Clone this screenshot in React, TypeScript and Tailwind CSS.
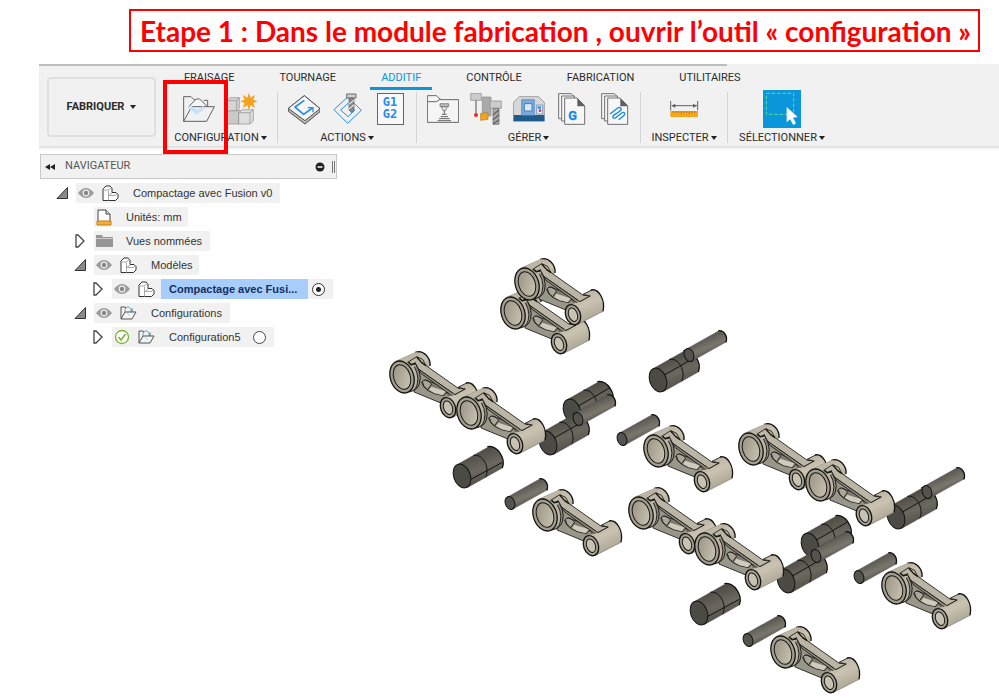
import type { ReactNode } from 'react';

const TABS = ['FRAISAGE', 'TOURNAGE', 'ADDITIF', 'CONTRÔLE', 'FABRICATION', 'UTILITAIRES'];

function Icon({ box, children }: { box: string; children: ReactNode }) {
  return (
    <button className="block h-8 w-8 shrink-0">
      <svg viewBox={box} className="h-8 w-8" fill="none" aria-hidden="true">
        {children}
      </svg>
    </button>
  );
}

function FolderIcon() {
  return (
    <Icon box="456 99 96 96">
      <path d="M458 184V110h22l9 9h8" stroke="#606060" strokeWidth="3" />
      <path d="M518 121h12v18" stroke="#606060" strokeWidth="3" />
      <path d="M474 139l22-22h10l22 22" fill="#f4f7f9" stroke="#606060" strokeWidth="3" />
      <path d="M458 184l24-44h68l-23 44z" fill="#f0f1f2" stroke="#606060" strokeWidth="3" />
      <path d="M471 143l10-6 17 13 18-12 6 6-24 20z" fill="#c6e2f5" />
    </Icon>
  );
}

function CubesIcon() {
  return (
    <Icon box="586 99 96 96">
      <g stroke="#8b8b8b" strokeWidth="2" strokeLinejoin="round">
        <path d="M588 122l10-9h28v33l-8 8h-30z" fill="#d5d5d5" />
        <path d="M588 122h30l8-9M618 122v32" />
        <path d="M588 158l8-6h36v34l-8 6h-36z" fill="#c9c9c9" />
        <path d="M624 158v34" />
        <path d="M624 158l11-9h33v34l-10 9h-34z" fill="#dedede" />
        <path d="M624 158h34l10-9M658 158v34" />
      </g>
      <path d="M655 98l5 15 13-9-5 15 13 5-13 5 5 15-13-8-5 14-5-14-14 8 6-15-14-5 14-5-6-15 14 9z" fill="#f5a21b" />
    </Icon>
  );
}

function SimulateIcon() {
  return (
    <Icon box="57 99 96 96">
      <path d="M58 145l48-38 47 39v9l-45 37-50-38z" fill="#b9b9b9" stroke="#505050" strokeWidth="3" />
      <path d="M58 145l48-38 47 39-45 36z" fill="#f6f6f6" stroke="#505050" strokeWidth="3" />
      <path d="M106 121L78 141l26 22 26-19" stroke="#258cf0" strokeWidth="5" strokeLinejoin="round" />
      <path d="M116 143l16 0v14" stroke="#258cf0" strokeWidth="4" />
    </Icon>
  );
}

function ToolpathIcon() {
  return (
    <Icon box="184 99 96 96">
      <path d="M193 149l41-38 41 40-41 39z" stroke="#258cf0" strokeWidth="3" />
      <path d="M213 150l22-20 20 21-20 19z" stroke="#258cf0" strokeWidth="3" />
      <path d="M231 102h28v12h-28z" fill="#d0d0d0" stroke="#686868" strokeWidth="3" />
      <path d="M238 114h15v36l-7 8-8-8z" fill="#858585" stroke="#606060" strokeWidth="2" />
      <path d="M238 133l15-12M238 147l15-13" stroke="#dedede" strokeWidth="4" />
    </Icon>
  );
}

function PostIcon() {
  return (
    <button className="flex h-8 w-8 shrink-0 items-center justify-center">
      <span className="block h-8 w-[27px] border border-[#666] bg-[#f8f8f8] pt-[2px] text-center font-['DejaVu_Sans_Mono',monospace] text-[12px] leading-[12px] font-bold text-[#258cf0]">
        G1 G2
      </span>
    </button>
  );
}

function LibraryIcon() {
  return (
    <Icon box="474 102 96 96">
      <path d="M475 190V110h27l13 12h54v68z" fill="#f5f5f5" stroke="#666" strokeWidth="3" />
      <path d="M476 128h26l13-8" stroke="#666" strokeWidth="3" />
      <path d="M513 134h26v9h-26z" fill="#bbb" stroke="#666" strokeWidth="2" />
      <path d="M517 143h18l-5 12h-8z" fill="#ddd" stroke="#666" strokeWidth="2" />
      <path d="M526 154v12M519 166h14M515 173h22M510 179h32M506 185h40" stroke="#666" strokeWidth="3" />
    </Icon>
  );
}

function ToolsIcon() {
  return (
    <Icon box="600 99 96 96">
      <path d="M602 100h32v21h-32z" fill="#ccc" stroke="#888" strokeWidth="2" />
      <path d="M618 121v38" stroke="#777" strokeWidth="4" />
      <circle cx="618" cy="165" r="6" fill="#ef2929" />
      <path d="M637 111h26v57h-26z" fill="#aaa" stroke="#888" strokeWidth="2" />
      <path d="M632 160l22-2v20l-22 3z" fill="#f5a21b" stroke="#b47817" strokeWidth="2" />
      <path d="M660 123h34v22h-34z" fill="#ccc" stroke="#888" strokeWidth="2" />
      <path d="M669 145h18v48h-18z" fill="#aaa" stroke="#666" strokeWidth="2" />
      <path d="M669 164l18-14M669 179l18-15M669 193l18-14" stroke="#606060" strokeWidth="4" />
    </Icon>
  );
}

function MachineIcon() {
  return (
    <Icon box="730 102 96 96">
      <path d="M731 187v-57l18-17h58l17 17v57z" fill="#d7d7d7" stroke="#7b7b7b" strokeWidth="2" />
      <path d="M732 168h92v18h-92z" fill="#1f5c8b" />
      <path d="M756 122h38v47h-38z" fill="#79a9dd" stroke="#4781ba" strokeWidth="2" />
      <path d="M764 134h23v22h-23z" fill="#dbe9f5" stroke="#4781ba" strokeWidth="3" />
      <path d="M801 138h18v27h-18z" fill="#eee" stroke="#4781ba" strokeWidth="2" />
      <path d="M804 142h10v7h-10z" fill="#258cf0" />
      <circle cx="811" cy="155" r="4" fill="#e6226d" />
    </Icon>
  );
}

function Sheets({ children }: { children: ReactNode }) {
  return (
    <Icon box="18 99 96 96">
      <g fill="#f7f7f7" stroke="#707070" strokeWidth="3">
        <path d="M26 176v-75h38l8 8v67z" />
        <path d="M35 183v-75h38v75z" />
        <path d="M44 193v-79h37l23 23v56z" />
      </g>
      <path d="M82 115l23 24H82z" fill="#606060" />
      {children}
    </Icon>
  );
}

function MeasureIcon() {
  return (
    <Icon box="354 99 96 96">
      <path d="M362 123v28M443 123v28M366 137h74" stroke="#606060" strokeWidth="3" />
      <path d="M364 137l12-6v12zM441 137l-12-6v12z" fill="#606060" />
      <path d="M361 153h83v18h-83z" fill="#f9a51a" />
      <path d="M370 153v6M378 153v6M386 153v6M394 153v9M402 153v6M410 153v6M418 153v9M426 153v6M434 153v6" stroke="#805b20" strokeWidth="2" />
    </Icon>
  );
}

function SelectIcon() {
  return (
    <button className="block h-[38px] w-[38px] bg-[#0b95da]">
      <svg viewBox="640 90 114 114" className="h-[38px] w-[38px]" fill="none" aria-hidden="true">
        <path d="M650 100h82v63h-82z" stroke="#55df94" strokeWidth="3" strokeDasharray="11 5" />
        <path d="M711 141v46l10-9 10 17 8-5-9-17 14-2z" fill="#fff" />
      </svg>
    </button>
  );
}

function Group({ label, width, children }: { label: string; width: string; children: ReactNode }) {
  return (
    <section className={`flex shrink-0 flex-col items-center ${width}`}>
      <div className="flex h-[38px] items-center gap-[11px]">{children}</div>
      <button className="mt-[2px] flex h-4 items-center gap-[2px] whitespace-nowrap">
        {label}
        <Caret />
      </button>
    </section>
  );
}

function Caret() {
  return (
    <svg viewBox="0 0 6 4" className="h-1 w-[6px]" aria-hidden="true">
      <path d="M0 0h6L3 4z" fill="#222" />
    </svg>
  );
}

function Divider() {
  return <div className="mt-[2px] h-[51px] w-px shrink-0 bg-[#d5d5d5]" />;
}

function Toolbar() {
  return (
    <nav className="relative ml-[39px] flex h-[86px] border-b-2 border-[#f6f6f6] bg-[#f1f1f1] font-[Roboto,sans-serif] text-[11px] text-[#2c2c2c]">
      <div className="absolute top-0 left-0 h-[2px] w-[688px] bg-[#bcbcbc]" />
      <div className="flex flex-1 border-b-2 border-[#e3e3e3]">
        <button className="mt-[13px] ml-2 flex h-[60px] w-[109px] shrink-0 items-center justify-center gap-[6px] rounded border-2 border-[#dfdfdf] font-bold">
          FABRIQUER <Caret />
        </button>
        <div className="ml-2 flex flex-col">
          <div className="mt-1 ml-[9px] flex h-[22px] gap-[23px]">
            {TABS.map((tab) => (
              <button
                key={tab}
                className={
                  tab === 'ADDITIF'
                    ? 'border-b-3 border-[#0b95da] px-[11px] pt-px text-[#0b95da]'
                    : 'border-b-3 border-transparent px-[11px] pt-px'
                }
              >
                {tab}
              </button>
            ))}
          </div>
          <div className="flex">
            <Group label="CONFIGURATION" width="w-[113px]">
              <FolderIcon />
              <CubesIcon />
            </Group>
            <Divider />
            <Group label="ACTIONS" width="w-[138px]">
              <SimulateIcon />
              <ToolpathIcon />
              <PostIcon />
            </Group>
            <Divider />
            <Group label="GÉRER" width="w-[223px]">
              <LibraryIcon />
              <ToolsIcon />
              <MachineIcon />
              <Sheets>
                <text x="55" y="181" fontSize="38" fontWeight="700" fill="#1688e8" stroke="#1688e8" fontFamily="Roboto, sans-serif">G</text>
              </Sheets>
              <Sheets>
                <path d="M51 162l23-18q10-4 11 3-1 5-8 9l-15 10q-5 6 0 8 5 1 10-4l14-11q7-4 9 1 1 4-4 8l-14 11" stroke="#1688e8" strokeWidth="4" />
              </Sheets>
            </Group>
            <Divider />
            <Group label="INSPECTER" width="w-[86px]">
              <MeasureIcon />
            </Group>
            <Divider />
            <Group label="SÉLECTIONNER" width="w-[108px]">
              <SelectIcon />
            </Group>
          </div>
        </div>
      </div>
      <div className="absolute top-4 left-[124px] h-[74px] w-[65px] border-4 border-[#f00]" />
    </nav>
  );
}

function Arrow({ open }: { open?: boolean }) {
  return (
    <button className="flex h-5 w-5 shrink-0 items-center" aria-label={open ? 'Réduire' : 'Développer'}>
      <svg viewBox="0 0 14 14" className="h-[14px] w-[14px]" aria-hidden="true">
        {open ? (
          <path d="M1 12.500h10.500V1.500z" fill="#8a8a8a" stroke="#333" />
        ) : (
          <path d="M2 1v12h2l6-6-6-6z" fill="#fff" stroke="#444" strokeWidth="1.300" />
        )}
      </svg>
    </button>
  );
}

function Eye() {
  return (
    <svg viewBox="0 0 16 12" className="h-3 w-4 shrink-0" aria-hidden="true">
      <path d="M0 6q8-10 16 0-8 10-16 0" fill="#9c9c9c" />
      <circle cx="8" cy="6" r="3.400" fill="#eee" />
      <circle cx="8" cy="6" r="2.200" fill="#888" />
    </svg>
  );
}

function Body() {
  return (
    <svg viewBox="0 0 17 17" className="h-[17px] w-[17px] shrink-0" fill="#fff" stroke="#333" strokeLinejoin="round" aria-hidden="true">
      <path d="M1 15.500V4l3-3h4l2 2v4.500h4l2 2V13l-2.500 2.500z" />
      <path d="M1.500 5H6l3.500-2.500M6.500 5.500v10M7 10.500L10 8M7 10.500h6L15.500 9" stroke="#aaa" fill="none" />
    </svg>
  );
}

function Setup() {
  return (
    <svg viewBox="0 0 17 14" className="h-[14px] w-[17px] shrink-0" fill="none" stroke="#555" aria-hidden="true">
      <path d="M1 13V1h4l1 1M12 2.500V6" />
      <path d="M5 6V3l2-2h2l2 2v3" stroke="#6aa5c8" />
      <path d="M1 13l4-7h11l-4 7z" fill="#f4f4f4" />
      <path d="M7 7l3 3" stroke="#acd2ea" />
    </svg>
  );
}

function Units() {
  return (
    <svg viewBox="0 0 16 17" className="h-[17px] w-4 shrink-0" aria-hidden="true">
      <path d="M2 12V1h8l4 4v7" fill="#fff" stroke="#444" />
      <path d="M10 1v4h4" fill="#ddd" stroke="#444" />
      <path d="M1 12h14v4H1z" fill="#f2b233" stroke="#c47f12" />
    </svg>
  );
}

function Folder() {
  return (
    <svg viewBox="0 0 17 14" className="h-[14px] w-[17px] shrink-0" aria-hidden="true">
      <path d="M0 1h6l1 2h10v10H0z" fill="#969696" />
      <path d="M0 4.500h17" stroke="#ccc" />
    </svg>
  );
}

function Check() {
  return (
    <svg viewBox="0 0 16 16" className="h-4 w-4 shrink-0" fill="none" stroke="#79b530" aria-hidden="true">
      <circle cx="8" cy="8" r="6.500" fill="#fff" strokeWidth="1.300" />
      <path d="M4.500 8l2.500 3 4.500-6" strokeWidth="1.600" />
    </svg>
  );
}

function Navigator() {
  return (
    <aside className="ml-[40px] w-[297px] shrink-0 font-['Liberation_Sans',Arial,sans-serif] text-[11px] text-[#333]">
      <header className="flex h-[25px] items-center border border-[#c9c9c9] bg-[#f1f1f1] pr-px pl-1 font-[Roboto,sans-serif]">
        <svg viewBox="0 0 10 6" className="h-[6px] w-[10px]" aria-hidden="true">
          <path d="M5 0v6L0 3zM10 0v6L5 3z" fill="#222" />
        </svg>
        <h2 className="ml-[10px] flex-1 text-[#555]">NAVIGATEUR</h2>
        <svg viewBox="0 0 10 10" className="mr-[7px] h-[10px] w-[10px]" aria-hidden="true">
          <circle cx="5" cy="5" r="4.500" fill="#222" />
          <path d="M2.500 5h5" stroke="#fff" strokeWidth="1.500" />
        </svg>
        <div className="h-3 w-[3px] border-x border-[#777]" />
      </header>
      <ul className="mt-1 flex flex-col gap-1">
        <li className="flex pl-4">
          <Arrow open />
          <div className="flex h-5 items-center bg-[#f1f1f1] pr-2 pl-[2px]">
            <Eye />
            <span className="mr-[14px] ml-2"><Body /></span>
            Compactage avec Fusion v0
          </div>
        </li>
        <li className="flex pl-[54px]">
          <div className="flex h-5 items-center gap-[14px] bg-[#f1f1f1] pr-[6px] pl-[2px]">
            <Units />
            Unités: mm
          </div>
        </li>
        <li className="flex pl-[34px]">
          <Arrow />
          <div className="flex h-5 items-center gap-[13px] bg-[#f1f1f1] pr-2 pl-[2px]">
            <Folder />
            Vues nommées
          </div>
        </li>
        <li className="flex pl-[34px]">
          <Arrow open />
          <div className="flex h-5 items-center bg-[#f1f1f1] pr-[6px] pl-[2px]">
            <Eye />
            <span className="mr-[14px] ml-2"><Body /></span>
            Modèles
          </div>
        </li>
        <li className="flex pl-[52px]">
          <Arrow />
          <div className="flex h-5 items-center bg-[#f1f1f1] pr-2 pl-[2px]">
            <Eye />
            <span className="mr-[6px] ml-2"><Body /></span>
            <label htmlFor="model" className="flex h-5 w-[147px] items-center bg-[#a9cdfb] pl-2 font-bold whitespace-nowrap text-[#12305e]">
              Compactage avec Fusi...
            </label>
            <input
              id="model"
              type="radio"
              name="model"
              defaultChecked
              className="ml-1 h-[13px] w-[13px] appearance-none rounded-full border border-[#333] bg-white bg-[radial-gradient(circle,#222_2px,transparent_3px)]"
            />
          </div>
        </li>
        <li className="flex pl-[34px]">
          <Arrow open />
          <div className="flex h-5 items-center bg-[#f1f1f1] pr-2 pl-[2px]">
            <Eye />
            <span className="mr-[14px] ml-2"><Setup /></span>
            Configurations
          </div>
        </li>
        <li className="flex pl-[52px]">
          <Arrow />
          <div className="flex h-5 items-center bg-[#f1f1f1] pr-2 pl-[2px]">
            <Check />
            <span className="mr-[14px] ml-2"><Setup /></span>
            <label htmlFor="setup">Configuration5</label>
            <input
              id="setup"
              type="radio"
              name="setup"
              className="ml-3 h-[13px] w-[13px] appearance-none rounded-full border border-[#444] bg-white"
            />
          </div>
        </li>
      </ul>
    </aside>
  );
}

const DRUMS = [
  [572, 411, 0], [548, 443, 0], [658, 380, 0], [462, 476, 1],
  [896, 517, 0], [810, 545, 0], [786, 581, 0], [699, 613, 1],
];
const PINS = [
  [510, 503], [578, 419], [689, 355], [622, 439], [927, 492], [816, 556], [859, 577], [748, 640],
];
const ARMS = [
  [513, 313], [527, 284], [402, 377], [469, 413], [545, 515], [656, 451],
  [751, 449], [818, 485], [641, 513], [707, 549], [894, 588], [783, 652],
];

function Drum({ x, y, low }: { x: number; y: number; low: boolean }) {
  return (
    <g transform={`translate(${x} ${y}) scale(.3333)`} stroke="#111">
      <path d="M-13-35L80-88C104-94 133-54 121-24L16 35z" fill="url(#dark)" stroke="none" />
      <path d="M-13-35L80-88M121-24L16 35" stroke="#444" strokeWidth="1" />
      <path d="M76-88C104-94 133-54 121-24" fill="none" strokeWidth="4" />
      <path d="M34-62C62-68 85-25 71 4" fill="none" strokeWidth="3" />
      <path d={low ? 'M27 10L121-41' : 'M19-15L64-41L112-69'} fill="none" strokeWidth="3" />
      <ellipse rx="25" ry="37" transform="rotate(-20)" fill="#4c4a45" strokeWidth="3" />
    </g>
  );
}

function Pin({ x, y }: { x: number; y: number }) {
  return (
    <g transform={`translate(${x} ${y}) scale(.3333)`} stroke="#111">
      <path d="M-8-18L90-73C106-75 118-53 110-38L8 19z" fill="url(#pin)" stroke="#444" strokeWidth="1" />
      <path d="M88-73C106-75 118-53 110-38" fill="none" strokeWidth="4" />
      <ellipse rx="14" ry="20" transform="rotate(-20)" fill="#55534d" strokeWidth="3" />
    </g>
  );
}

function Arm({ x, y }: { x: number; y: number }) {
  return (
    <g transform={`translate(${x} ${y}) scale(.3333) translate(-107 -393)`} stroke="#161511" strokeWidth="2.500" strokeLinejoin="round">
      <path d="M88 346L149 319C171 309 194 337 191 360L150 400z" fill="url(#light)" stroke="none" />
      <path d="M88 346L149 319" stroke="#8c8778" />
      <path d="M147 319C171 309 194 337 191 360" fill="none" strokeWidth="4" />
      <path d="M151 362L185 371L270 437L262 475L221 470L143 438z" fill="#99968a" />
      <path d="M166 409Q175 396 190 407L205 412L246 434L232 449L204 443L184 433Q170 424 166 409z" fill="#7d7a70" />
      <path d="M188 432L195 422L238 436L229 448L205 442z" fill="#d0cbbd" stroke="none" />
      <path d="M168 406Q175 398 189 408L196 414L184 431Q170 424 168 406z" fill="#aaa698" />
      <path d="M242 437Q244 427 257 428L263 439L247 449z" fill="#c6c0b1" />
      <ellipse cx="127" cy="386" rx="33" ry="49" transform="rotate(-17 127 386)" fill="#8f8c80" />
      <ellipse cx="119" cy="389" rx="34" ry="50" transform="rotate(-17 119 389)" fill="#bbb6a7" />
      <path d="M88 346L151 318L162 342L138 370L108 342z" fill="#bcb6a6" stroke="none" />
      <path d="M124 349L151 332L169 340L178 358L276 427L297 429L266 446L157 370L149 354L134 357z" fill="#bab5a5" />
      <path d="M157 370L266 446L266 456L164 382z" fill="#8d8a7e" />
      <path d="M151 333L166 350L179 359M127 349L135 356L149 351" fill="none" strokeWidth="4" />
      <path d="M229 456L266 446L297 429L275 424L301 411C320 405 342 442 335 475L257 515z" fill="url(#light)" stroke="none" />
      <path d="M266 446L297 429L275 424L301 411" fill="none" />
      <path d="M230 456L264 442M335 475L257 515" stroke="#7d796d" strokeWidth="2" />
      <path d="M299 411C322 405 343 442 335 475" fill="none" strokeWidth="4" />
      <ellipse cx="245" cy="485" rx="22" ry="31" transform="rotate(-20 245 485)" fill="#a5a194" strokeWidth="4" />
      <ellipse cx="245" cy="485" rx="13" ry="21" transform="rotate(-20 245 485)" fill="#c8c2b3" strokeWidth="3" />
      <ellipse cx="107" cy="393" rx="35" ry="49" transform="rotate(-18 107 393)" fill="#a29e90" strokeWidth="4" />
      <ellipse cx="107" cy="393" rx="25" ry="38" transform="rotate(-18 107 393)" fill="url(#bore)" strokeWidth="3" />
    </g>
  );
}

function Scene() {
  return (
    <svg viewBox="380 154 619 545" className="ml-[43px] h-[545px] w-[619px] shrink-0" role="img" aria-label="Bielles, axes et bagues">
      <defs>
        <linearGradient id="light" x1=".2" y1="0" x2="0.700" y2="1">
          <stop offset="0" stopColor="#b0aa9b" />
          <stop offset=".45" stopColor="#cac3b2" />
          <stop offset="1" stopColor="#a39d8d" />
        </linearGradient>
        <linearGradient id="bore" x1="0" y1="0" x2="1" y2="1">
          <stop offset="0" stopColor="#968f80" />
          <stop offset="1" stopColor="#cec8b9" />
        </linearGradient>
        <linearGradient id="dark" x1=".25" y1="0" x2=".7" y2="1">
          <stop offset="0" stopColor="#403e38" />
          <stop offset=".55" stopColor="#6b685f" />
          <stop offset="1" stopColor="#45433d" />
        </linearGradient>
        <linearGradient id="pin" x1=".3" y1=".2" x2=".65" y2=".8">
          <stop offset="0" stopColor="#4e4c46" />
          <stop offset=".6" stopColor="#7a776e" />
          <stop offset="1" stopColor="#504e47" />
        </linearGradient>
      </defs>
      {DRUMS.map(([x, y, low]) => <Drum key={`${x}-${y}`} x={x} y={y} low={low === 1} />)}
      {PINS.map(([x, y]) => <Pin key={`${x}-${y}`} x={x} y={y} />)}
      {ARMS.map(([x, y]) => <Arm key={`${x}-${y}`} x={x} y={y} />)}
    </svg>
  );
}

export default function App() {
  return (
    <div className="overflow-hidden bg-white">
      <header className="pt-[9px] pr-[19px] pb-3 pl-[129px]">
        <h1 className="flex h-[43px] items-center border-2 border-[#f00] pl-[9px] font-[Lato,sans-serif] text-[28px] font-bold whitespace-nowrap text-[#f00]">
          Etape 1 : Dans le module fabrication , ouvrir l’outil « configuration »
        </h1>
      </header>
      <Toolbar />
      <main className="mt-1 flex">
        <Navigator />
        <Scene />
      </main>
    </div>
  );
}
